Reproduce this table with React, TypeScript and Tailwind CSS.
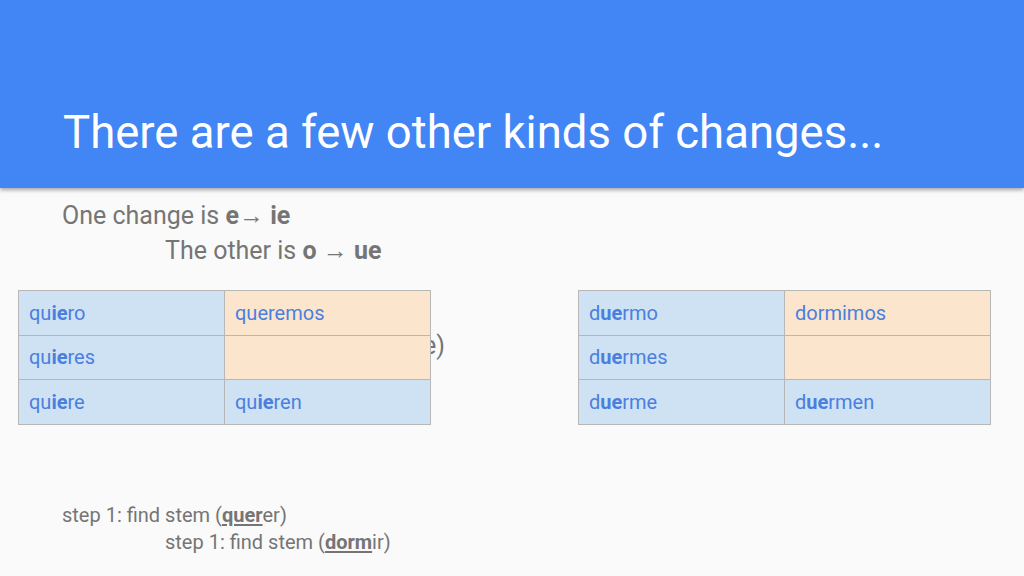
import React from 'react';

type Part = { t: string; b?: boolean };
type Cell = { parts: Part[]; tone: 'blue' | 'peach' };

const font = { fontFamily: 'Roboto, "Liberation Sans", sans-serif' };

const quererRows: Cell[][] = [
  [
    { parts: [{ t: 'qu' }, { t: 'ie', b: true }, { t: 'ro' }], tone: 'blue' },
    { parts: [{ t: 'queremos' }], tone: 'peach' },
  ],
  [
    { parts: [{ t: 'qu' }, { t: 'ie', b: true }, { t: 'res' }], tone: 'blue' },
    { parts: [], tone: 'peach' },
  ],
  [
    { parts: [{ t: 'qu' }, { t: 'ie', b: true }, { t: 're' }], tone: 'blue' },
    { parts: [{ t: 'qu' }, { t: 'ie', b: true }, { t: 'ren' }], tone: 'blue' },
  ],
];

const dormirRows: Cell[][] = [
  [
    { parts: [{ t: 'd' }, { t: 'ue', b: true }, { t: 'rmo' }], tone: 'blue' },
    { parts: [{ t: 'dormimos' }], tone: 'peach' },
  ],
  [
    { parts: [{ t: 'd' }, { t: 'ue', b: true }, { t: 'rmes' }], tone: 'blue' },
    { parts: [], tone: 'peach' },
  ],
  [
    { parts: [{ t: 'd' }, { t: 'ue', b: true }, { t: 'rme' }], tone: 'blue' },
    { parts: [{ t: 'd' }, { t: 'ue', b: true }, { t: 'rmen' }], tone: 'blue' },
  ],
];

function VerbTable({ rows }: { rows: Cell[][] }) {
  return (
    <table className="relative z-10 w-[413px] border-collapse table-fixed">
      <tbody>
        {rows.map((row, i) => (
          <tr key={i}>
            {row.map((cell, j) => (
              <td
                key={j}
                className={
                  'h-[44.5px] border border-[#b7b7b7] pl-[10px] text-[20px] text-[#4a7fe0] align-middle ' +
                  (cell.tone === 'blue' ? 'bg-[#cfe2f3]' : 'bg-[#fce5cd]')
                }
              >
                {cell.parts.map((p, k) =>
                  p.b ? (
                    <b key={k} className="font-bold">
                      {p.t}
                    </b>
                  ) : (
                    <span key={k}>{p.t}</span>
                  )
                )}
              </td>
            ))}
          </tr>
        ))}
      </tbody>
    </table>
  );
}

export default function App() {
  return (
    <div className="w-[1024px] h-[576px] overflow-hidden bg-[#fafafa]" style={font}>
      <header className="relative z-20 h-[188px] bg-[#4285f4] shadow-[0_2px_4px_rgba(0,0,0,0.35)] flex items-end pl-[63px] pb-[33px]">
        <h1 className="text-[45.5px] leading-none text-white font-normal">
          There are a few other kinds of changes...
        </h1>
      </header>

      <div className="pt-[10px] text-[25px] leading-[35px] text-[#757575]">
        <p className="pl-[62px]">
          One change is <b className="font-bold">e</b>→ <b className="font-bold">ie</b>
        </p>
        <p className="pl-[165px]">
          The other is <b className="font-bold">o</b> → <b className="font-bold">ue</b>
        </p>
      </div>

      <div className="relative mt-[22px] pl-[18px] flex gap-[147px]">
        <span className="absolute z-0 top-[37px] right-[579px] text-[25px] text-[#757575]">
          (quiere)
        </span>
        <VerbTable rows={quererRows} />
        <VerbTable rows={dormirRows} />
      </div>

      <div className="mt-[77px] text-[20px] leading-[27px] text-[#757575]">
        <p className="pl-[62px]">
          step 1: find stem (<b className="font-bold underline underline-offset-2">quer</b>er)
        </p>
        <p className="pl-[165px]">
          step 1: find stem (<b className="font-bold underline underline-offset-2">dorm</b>ir)
        </p>
      </div>
    </div>
  );
}
